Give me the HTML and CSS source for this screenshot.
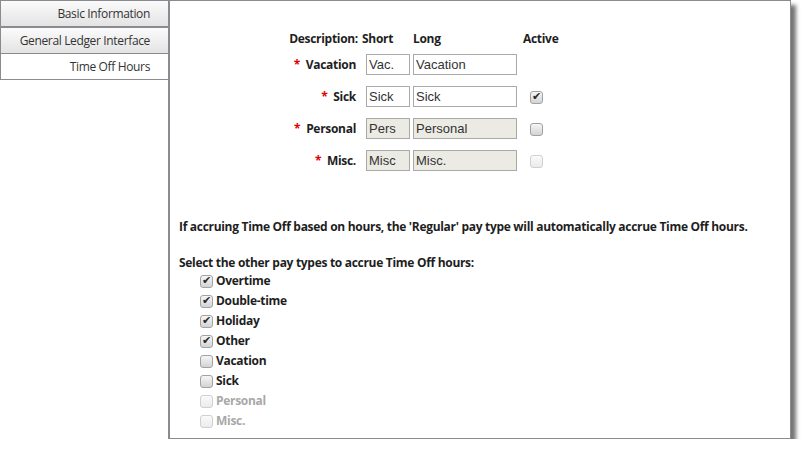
FILE: index.html
```html
<!DOCTYPE html>
<html>
<head>
<meta charset="utf-8">
<link rel="stylesheet" href="styles.css">
</head>
<body>
<div class="frame">
  <nav class="tabs">
    <div class="tab tab-first">Basic Information</div>
    <div class="tab">General Ledger Interface</div>
    <div class="tab tab-active">Time Off Hours</div>
  </nav>
  <main class="panel">
    <div class="desc-grid">
      <div class="hdr hdr-label">Description:</div>
      <div class="hdr">Short</div>
      <div class="hdr">Long</div>
      <div class="hdr">Active</div>

      <div class="lbl"><span class="req">*</span> Vacation</div>
      <div class="cell-short"><input class="txt txt-short" value="Vac."></div>
      <div class="cell-long"><input class="txt txt-long" value="Vacation"></div>
      <div class="cell-active"></div>

      <div class="lbl"><span class="req">*</span> Sick</div>
      <div class="cell-short"><input class="txt txt-short" value="Sick"></div>
      <div class="cell-long"><input class="txt txt-long" value="Sick"></div>
      <div class="cell-active"><span class="cb checked"></span></div>

      <div class="lbl"><span class="req">*</span> Personal</div>
      <div class="cell-short"><input class="txt txt-short ro" value="Pers" readonly></div>
      <div class="cell-long"><input class="txt txt-long ro" value="Personal" readonly></div>
      <div class="cell-active"><span class="cb"></span></div>

      <div class="lbl"><span class="req">*</span> Misc.</div>
      <div class="cell-short"><input class="txt txt-short ro" value="Misc" readonly></div>
      <div class="cell-long"><input class="txt txt-long ro" value="Misc." readonly></div>
      <div class="cell-active"><span class="cb disabled"></span></div>
    </div>

    <p class="note">If accruing Time Off based on hours, the 'Regular' pay type will automatically accrue Time Off hours.</p>
    <p class="select">Select the other pay types to accrue Time Off hours:</p>
    <ul class="paytypes">
      <li><span class="cb checked"></span>Overtime</li>
      <li><span class="cb checked"></span>Double-time</li>
      <li><span class="cb checked"></span>Holiday</li>
      <li><span class="cb checked"></span>Other</li>
      <li><span class="cb"></span>Vacation</li>
      <li><span class="cb"></span>Sick</li>
      <li class="off"><span class="cb disabled"></span>Personal</li>
      <li class="off"><span class="cb disabled"></span>Misc.</li>
    </ul>
  </main>
</div>
</body>
</html>
```
FILE: styles.css
```css
html, body {
  margin: 0;
  padding: 0;
  background: #ffffff;
}
body {
  font-family: "Open Sans", "Noto Sans", sans-serif;
  color: #1e1e1e;
}
.frame {
  width: 791px;
  height: 439px;
  box-sizing: border-box;
  display: flex;
  border-top: 1px solid #8a8a90;
  border-right: 1px solid #8a8a90;
  box-shadow: 5px 5px 4px rgba(0, 0, 0, 0.55);
  background: #fff;
}
.tabs {
  width: 169px;
  flex: none;
  border-right: 1px solid #8a8a90;
  box-sizing: border-box;
}
.tab {
  height: 26px;
  box-sizing: border-box;
  border: 1px solid #8a8a90;
  border-top: none;
  border-right: none;
  background: linear-gradient(#fbfbfb, #e3e3e3);
  font-size: 12px;
  letter-spacing: -0.35px;
  color: #333;
  text-align: right;
  padding-right: 18px;
  line-height: 26px;
}
.tab + .tab {
  border-top: 1px solid #8a8a90;
  height: 27px;
}
.tab.tab-active {
  background: #fff;
  border-top: none;
  height: 26px;
}
.panel {
  flex: 1;
  border-left: 1px solid #8a8a90;
  border-bottom: 1px solid #8a8a90;
  padding: 28px 0 0 9px;
  font-size: 12px;
  font-weight: bold;
  letter-spacing: -0.3px;
}
.desc-grid {
  display: grid;
  grid-template-columns: 183px 51px 110px 50px;
  grid-template-rows: 19px;
  grid-auto-rows: 32px;
  align-items: center;
}
.hdr {
  line-height: 19px;
}
.hdr-label {
  text-align: right;
  padding-right: 4px;
}
.lbl {
  text-align: right;
  padding-right: 6px;
}
.req {
  color: #e00000;
  margin-right: 3px;
}
.txt {
  box-sizing: border-box;
  height: 21px;
  border: 1px solid #a9a9a9;
  font-family: "Liberation Sans", Arial, sans-serif;
  font-size: 13px;
  letter-spacing: 0;
  color: #333;
  padding: 0 2px;
  margin: 0;
  background: #fff;
  display: block;
}
.txt.ro {
  background: #ebebe4;
}
.txt-short {
  width: 44px;
  margin-left: 4px;
}
.txt-long {
  width: 104px;
}
.cb {
  display: inline-block;
  flex: none;
  width: 13px;
  height: 13px;
  box-sizing: border-box;
  border: 1px solid #a2a2a2;
  border-radius: 3px;
  background: linear-gradient(#f6f6f6, #d3d3d3);
  position: relative;
  vertical-align: middle;
}
.cb.checked::after {
  content: "✔";
  position: absolute;
  left: 1px;
  top: -2px;
  font-size: 11px;
  line-height: 14px;
  color: #2a2a2a;
  font-weight: normal;
  letter-spacing: 0;
  font-family: "DejaVu Sans", sans-serif;
}
.cb.disabled {
  border-color: #d0d0d0;
  background: linear-gradient(#fafafa, #ebebeb);
}
.cell-active .cb {
  margin-left: 7px;
}
.note {
  margin: 42px 0 0 0;
  line-height: 18px;
}
.select {
  margin: 19px 0 0 0;
  line-height: 16px;
}
.paytypes {
  list-style: none;
  margin: 0;
  padding: 0 0 0 21px;
}
.paytypes li {
  height: 20px;
  line-height: 20px;
  display: flex;
  align-items: center;
}
.paytypes .cb {
  margin-right: 3px;
}
.paytypes li.off {
  color: #a8a8a8;
}
```
